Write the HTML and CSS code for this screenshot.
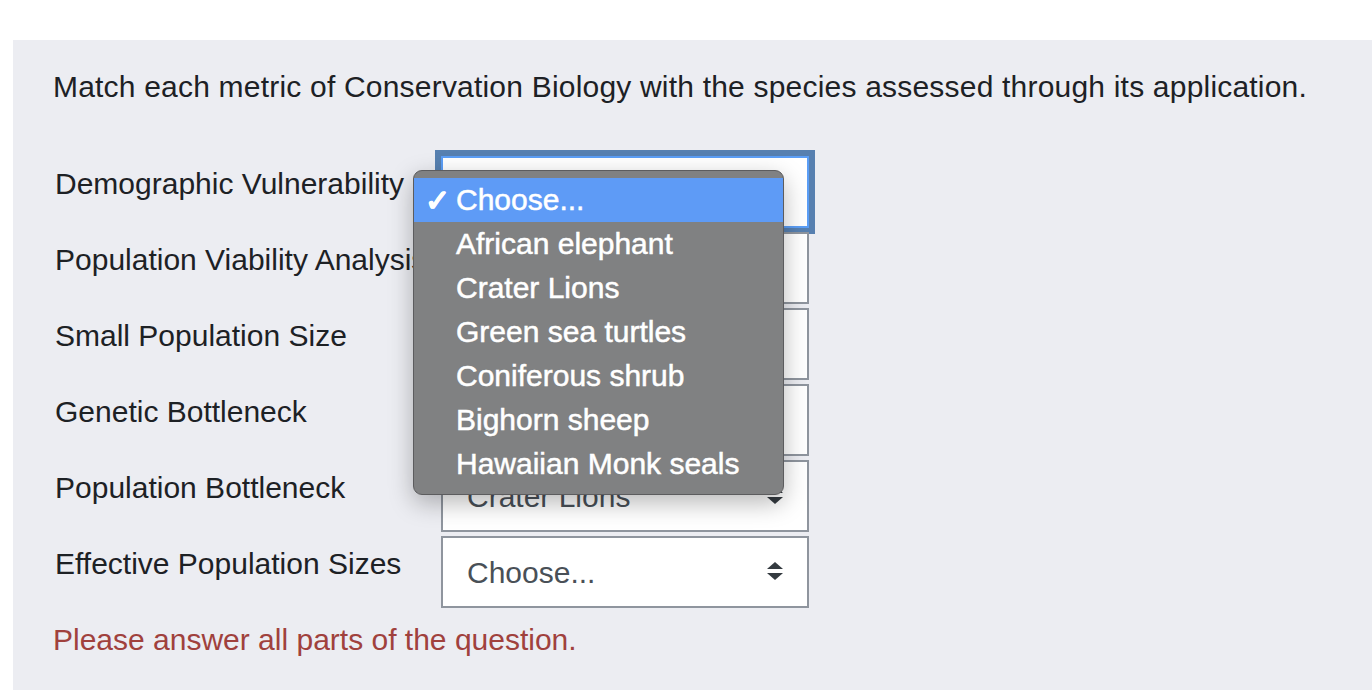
FILE: index.html
```html
<!DOCTYPE html>
<html lang="en">
<head>
  <meta charset="UTF-8">
  <title>Matching question</title>
  <link rel="stylesheet" href="styles.css">
</head>
<body>
  <div class="que">
    <p class="qtext">Match each metric of Conservation Biology with the species assessed through its application.</p>

    <div class="answers">
      <div class="row">
        <label class="term" for="sub0">Demographic Vulnerability</label>
        <div class="select-box focused">
          <select id="sub0">
            <option value=""></option>
          </select>

          <!-- open dropdown menu -->
          <ul class="menu">
            <li class="active"><span class="check">✓</span>Choose...</li>
            <li><span class="check"></span>African elephant</li>
            <li><span class="check"></span>Crater Lions</li>
            <li><span class="check"></span>Green sea turtles</li>
            <li><span class="check"></span>Coniferous shrub</li>
            <li><span class="check"></span>Bighorn sheep</li>
            <li><span class="check"></span>Hawaiian Monk seals</li>
          </ul>
        </div>
      </div>

      <div class="row">
        <label class="term" for="sub1">Population Viability Analysis</label>
        <div class="select-box">
          <select id="sub1"><option>Choose...</option></select>
          <svg class="arrows" width="16" height="19" viewBox="0 0 16 19"><polygon points="0,7 8,0 16,7"/><polygon points="0,11 16,11 8,18"/></svg>
        </div>
      </div>

      <div class="row">
        <label class="term" for="sub2">Small Population Size</label>
        <div class="select-box">
          <select id="sub2"><option>Choose...</option></select>
          <svg class="arrows" width="16" height="19" viewBox="0 0 16 19"><polygon points="0,7 8,0 16,7"/><polygon points="0,11 16,11 8,18"/></svg>
        </div>
      </div>

      <div class="row">
        <label class="term" for="sub3">Genetic Bottleneck</label>
        <div class="select-box">
          <select id="sub3"><option>Choose...</option></select>
          <svg class="arrows" width="16" height="19" viewBox="0 0 16 19"><polygon points="0,7 8,0 16,7"/><polygon points="0,11 16,11 8,18"/></svg>
        </div>
      </div>

      <div class="row">
        <label class="term" for="sub4">Population Bottleneck</label>
        <div class="select-box">
          <select id="sub4"><option>Crater Lions</option></select>
          <svg class="arrows" width="16" height="19" viewBox="0 0 16 19"><polygon points="0,7 8,0 16,7"/><polygon points="0,11 16,11 8,18"/></svg>
        </div>
      </div>

      <div class="row">
        <label class="term" for="sub5">Effective Population Sizes</label>
        <div class="select-box">
          <select id="sub5"><option>Choose...</option></select>
          <svg class="arrows" width="16" height="19" viewBox="0 0 16 19"><polygon points="0,7 8,0 16,7"/><polygon points="0,11 16,11 8,18"/></svg>
        </div>
      </div>
    </div>

    <div class="validation-error">Please answer all parts of the question.</div>
  </div>
</body>
</html>
```

FILE: styles.css
```css
body {
  margin: 0;
  background-color: #fff;
  font-family: 'Liberation Sans', Arial, Helvetica, sans-serif;
  color: #1d2125;
  overflow: hidden;
}

.que {
  box-sizing: border-box;
  height: 650px;
  margin: 40px 0 0 13px;
  padding: 24px 40px 0;
  background-color: #ecedf2;
  overflow: hidden;
}

.qtext {
  margin: 0 0 47px;
  font-size: 30px;
  line-height: 45px;
  letter-spacing: 0.2px;
}

.answers {
  display: flex;
  flex-direction: column;
  gap: 4px;
}

.row {
  display: flex;
  align-items: flex-start;
}

.term {
  box-sizing: border-box;
  flex: 0 0 388px;
  padding: 5px 0 0 2px;
  font-size: 30px;
  line-height: 45px;
  white-space: nowrap;
}

.select-box {
  position: relative;
  width: 368px;
  height: 72px;
}

.select-box select {
  -webkit-appearance: none;
  appearance: none;
  display: block;
  width: 100%;
  height: 100%;
  box-sizing: border-box;
  margin: 0;
  padding: 0 50px 0 24px;
  border: 2px solid #8f959e;
  border-radius: 0;
  background-color: #fff;
  font-family: inherit;
  font-size: 30px;
  color: #495057;
  outline: none;
}

.select-box.focused select {
  border-color: #5b9ef6;
  box-shadow: 0 0 0 6px #5780b0;
}

.arrows {
  position: absolute;
  right: 26px;
  top: 26px;
  fill: #343a40;
  pointer-events: none;
}

/* Open dropdown */
.menu {
  position: absolute;
  left: -28px;
  top: 14px;
  z-index: 10;
  width: 371px;
  box-sizing: border-box;
  margin: 0;
  padding: 7px 0 8px;
  list-style: none;
  background-color: #808182;
  border: 1px solid #5c5c5e;
  border-radius: 9px;
  box-shadow: 0 8px 24px rgba(0, 0, 0, 0.28);
}

.menu li {
  display: flex;
  height: 44px;
  align-items: center;
  font-size: 30px;
  color: #fff;
  -webkit-text-stroke: 0.5px #fff;
  white-space: nowrap;
}

.menu li.active {
  background-color: #5e9bf6;
}

.menu .check {
  flex: 0 0 31px;
  padding-left: 11px;
  font-size: 30px;
  font-weight: bold;
}

.validation-error {
  margin-top: 9px;
  font-size: 30px;
  line-height: 45px;
  color: #a0413d;
}
```
